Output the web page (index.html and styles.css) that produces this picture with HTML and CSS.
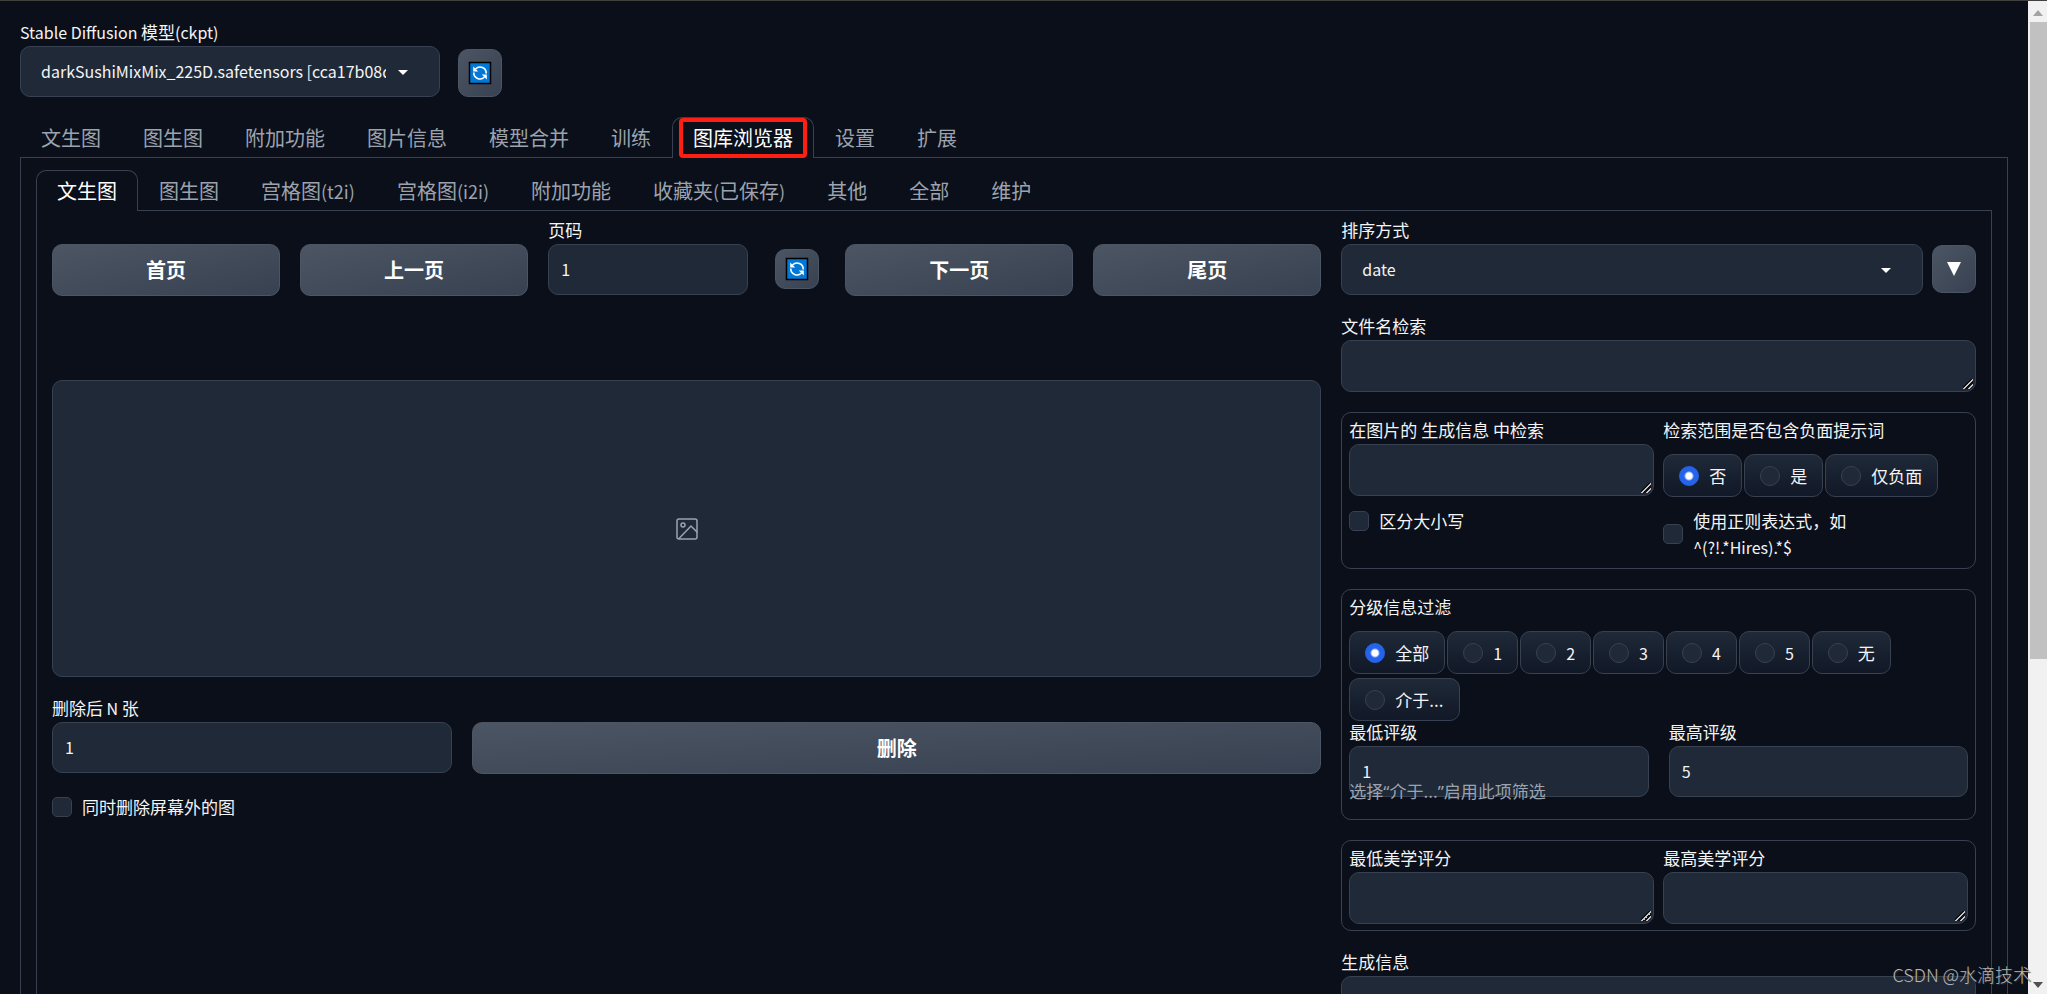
FILE: index.html
```html
<!DOCTYPE html>
<html lang="zh-CN">
<head>
<meta charset="utf-8">
<title>Stable Diffusion</title>
<link rel="stylesheet" href="styles.css">
</head>
<body>
<svg class="defs" aria-hidden="true">
  <symbol id="refresh" viewBox="0 0 24 24">
    <rect x="1.500" y="1.500" width="21" height="21" fill="#0078d7" stroke="#000" stroke-width="1.500"/>
    <g fill="none" stroke="#fff" stroke-width="1.600">
      <path d="M7.500 8A6.200 6.200 0 0 1 18.200 12.500"/>
      <path d="M16.500 16A6.200 6.200 0 0 1 5.800 11.500"/>
    </g>
    <path d="M5.200 5.500v5h5zM18.800 18.500v-5h-5z" fill="#fff"/>
  </symbol>
  <symbol id="caret" viewBox="0 0 18 18"><path d="M4 7h10l-5 5z" fill="#fff"/></symbol>
</svg>
<main class="app">
  <header class="quick">
    <div class="field model">
      <label for="ckpt"><span class="latin">Stable Diffusion </span>模型<span class="latin">(ckpt)</span></label>
      <div class="pick">
        <select id="ckpt" class="box"><option>darkSushiMixMix_225D.safetensors [cca17b08da]</option></select>
        <svg class="caret"><use href="#caret"/></svg>
      </div>
    </div>
    <button class="btn tool" aria-label="刷新模型"><svg class="icon"><use href="#refresh"/></svg></button>
  </header>

  <nav class="tabs">
    <button class="tab">文生图</button>
    <button class="tab">图生图</button>
    <button class="tab">附加功能</button>
    <button class="tab">图片信息</button>
    <button class="tab">模型合并</button>
    <button class="tab">训练</button>
    <button class="tab active marked">图库浏览器</button>
    <button class="tab">设置</button>
    <button class="tab">扩展</button>
  </nav>
  <section class="pane outer">
    <nav class="tabs">
      <button class="tab active">文生图</button>
      <button class="tab">图生图</button>
      <button class="tab">宫格图<span class="latin">(t2i)</span></button>
      <button class="tab">宫格图<span class="latin">(i2i)</span></button>
      <button class="tab">附加功能</button>
      <button class="tab">收藏夹<span class="latin">(</span>已保存<span class="latin">)</span></button>
      <button class="tab">其他</button>
      <button class="tab">全部</button>
      <button class="tab">维护</button>
    </nav>
    <section class="pane inner">
      <div class="left">
        <div class="pager">
          <button class="btn big">首页</button>
          <button class="btn big">上一页</button>
          <div class="field page"><label for="page">页码</label><input id="page" class="box" value="1"></div>
          <div class="reload"><button class="btn tool short" aria-label="刷新"><svg class="icon"><use href="#refresh"/></svg></button></div>
          <button class="btn big">下一页</button>
          <button class="btn big">尾页</button>
        </div>
        <div class="gallery">
          <svg class="picture" viewBox="0 0 24 24" fill="none" stroke="#9ca3af" stroke-width="1.500" stroke-linecap="round" stroke-linejoin="round"><rect x="2" y="2" width="20" height="20" rx="2"/><circle cx="8" cy="8" r="2"/><path d="M22 15l-6-6L4 21.500"/></svg>
        </div>
        <div class="remove">
          <div class="field count"><label for="count">删除后<span class="latin"> N </span>张</label><input id="count" class="box" value="1"></div>
          <button class="btn big">删除</button>
        </div>
        <label class="check"><input type="checkbox">同时删除屏幕外的图</label>
      </div>

      <div class="right">
        <div class="sort">
          <div class="field">
            <label for="sort">排序方式</label>
            <div class="pick">
              <select id="sort" class="box"><option>date</option></select>
              <svg class="caret"><use href="#caret"/></svg>
            </div>
          </div>
          <button class="btn tool" aria-label="降序"><svg class="down" viewBox="0 0 14 14"><path d="M0 0h14L7 14z" fill="#fff"/></svg></button>
        </div>
        <div class="field"><label for="name">文件名检索</label><textarea id="name" class="box"></textarea></div>

        <div class="group">
          <div class="cols">
            <div class="field"><label for="info">在图片的 生成信息 中检索</label><textarea id="info" class="box"></textarea></div>
            <fieldset>
              <legend>检索范围是否包含负面提示词</legend>
              <div class="radios">
                <label class="radio"><input type="radio" name="neg" checked>否</label>
                <label class="radio"><input type="radio" name="neg">是</label>
                <label class="radio"><input type="radio" name="neg">仅负面</label>
              </div>
            </fieldset>
          </div>
          <div class="cols options">
            <label class="check"><input type="checkbox">区分大小写</label>
            <label class="check"><input type="checkbox"><span>使用正则表达式，如<br><span class="latin">^(?!.*Hires).*$</span></span></label>
          </div>
        </div>

        <div class="group">
          <fieldset>
            <legend>分级信息过滤</legend>
            <div class="radios">
              <label class="radio"><input type="radio" name="rank" checked>全部</label>
              <label class="radio"><input type="radio" name="rank"><span class="latin">1</span></label>
              <label class="radio"><input type="radio" name="rank"><span class="latin">2</span></label>
              <label class="radio"><input type="radio" name="rank"><span class="latin">3</span></label>
              <label class="radio"><input type="radio" name="rank"><span class="latin">4</span></label>
              <label class="radio"><input type="radio" name="rank"><span class="latin">5</span></label>
              <label class="radio"><input type="radio" name="rank">无</label>
              <label class="radio"><input type="radio" name="rank">介于...</label>
            </div>
          </fieldset>
          <div class="cols wide">
            <div class="field"><label for="rmin">最低评级</label><input id="rmin" class="box" value="1"></div>
            <div class="field"><label for="rmax">最高评级</label><input id="rmax" class="box" value="5"></div>
          </div>
          <p class="hint">选择<span class="quote">“</span>介于...<span class="quote">”</span>启用此项筛选</p>
        </div>

        <div class="group">
          <div class="cols">
            <div class="field"><label for="amin">最低美学评分</label><textarea id="amin" class="box"></textarea></div>
            <div class="field"><label for="amax">最高美学评分</label><textarea id="amax" class="box"></textarea></div>
          </div>
        </div>
        <div class="field"><label for="gen">生成信息</label><textarea id="gen" class="box"></textarea></div>
      </div>
    </section>
  </section>
</main>
<div class="scroll" aria-hidden="true">
  <svg viewBox="0 0 10 6"><path d="M5 0l5 6H0z" fill="#a3a3a3"/></svg>
  <div class="track"><div class="thumb"></div></div>
  <svg viewBox="0 0 10 6"><path d="M0 0h10L5 6z" fill="#505050"/></svg>
</div>
<div class="watermark">CSDN @水滴技术</div>
</body>
</html>
```
FILE: styles.css
```css
* { box-sizing: border-box; }
body {
  margin: 0;
  height: 100vh;
  overflow: hidden;
  display: flex;
  border-top: 1px solid #41423f;
  background: #0b0f19;
  color: #f3f4f6;
  font: 17px/22px "Noto Sans CJK SC", sans-serif;
}
button, input, select, textarea { font: inherit; color: inherit; margin: 0; }
.latin { font-size: 16px; white-space: pre; }
.quote { font-family: "Noto Sans", sans-serif; }
.defs { position: absolute; width: 0; height: 0; }
.app { flex: 1; min-width: 0; height: 100%; overflow: hidden; padding: 20px 20px 0; }

.field { display: flex; flex-direction: column; min-width: 0; }
.field > label, legend { height: 25px; line-height: 22px; padding: 0; white-space: nowrap; }
.box {
  display: block;
  width: 100%;
  height: 51px;
  padding: 0 12px 2px;
  border: 1px solid #374151;
  border-radius: 10px;
  background: #1f2937;
  font-size: 16px;
  outline: none;
}
textarea.box { height: 52px; padding: 12px; resize: vertical; }
textarea.box::-webkit-resizer {
  background: linear-gradient(135deg, transparent 38%, #111 38% 46%, #c4c4c8 46% 60%, #111 60% 72%, #c4c4c8 72% 84%, transparent 84%) 3px 3px / 10px 10px no-repeat;
}
select.box { appearance: none; padding: 0 53px 2px 20px; }
.pick { position: relative; }
.caret { position: absolute; right: 28px; top: 17px; width: 18px; height: 18px; pointer-events: none; }

.btn {
  display: flex;
  align-items: center;
  justify-content: center;
  padding: 0;
  border: 1px solid #4b5563;
  border-radius: 10px;
  background: linear-gradient(to bottom right, #4b5563, #374151);
  color: #fff;
}
.big { flex: 1; height: 52px; margin-top: 25px; font-size: 20px; font-weight: 700; }
.tool { flex: none; width: 44px; height: 48px; }
.short { height: 40px; }
.icon { width: 24px; height: 24px; }
.down { width: 14px; height: 14px; }

.quick { display: flex; align-items: flex-end; gap: 18px; margin-bottom: 20px; }
.model { width: 420px; }

.tabs { display: flex; border-bottom: 1px solid #374151; }
.tab {
  position: relative;
  height: 41px;
  margin-bottom: -1px;
  padding: 0 20px;
  border: 1px solid transparent;
  border-bottom: 0;
  border-radius: 10px 10px 0 0;
  background: none;
  color: #9ca3af;
  font-size: 20px;
  white-space: nowrap;
}
.tab .latin { font-size: 18px; }
.active { border-color: #374151; background: #0b0f19; color: #fff; }
.marked::after {
  content: "";
  position: absolute;
  inset: 0 6px 0;
  border: 4px solid #ff1e12;
  border-radius: 4px;
}
.pane { border: 1px solid #374151; border-top: 0; }
.outer { padding: 12px 15px; }
.inner { display: grid; grid-template-columns: 2fr 1fr; gap: 20px; padding: 8px 15px 20px; }
.left, .right { display: flex; flex-direction: column; gap: 20px; min-width: 0; }

.pager { display: flex; gap: 20px; margin-bottom: 64px; }
.page { width: 200px; }
.reload { display: flex; justify-content: center; width: 57px; padding-top: 30px; }
.gallery {
  display: flex;
  align-items: center;
  justify-content: center;
  height: 297px;
  border: 1px solid #374151;
  border-radius: 10px;
  background: #1f2937;
}
.picture { width: 24px; height: 24px; }
.remove { display: flex; gap: 20px; }
.count { width: 400px; }

.check { display: flex; align-items: center; gap: 10px; line-height: 26px; }
input[type="checkbox"], input[type="radio"] {
  appearance: none;
  flex: none;
  width: 20px;
  height: 20px;
  border: 1px solid #374151;
  border-radius: 5px;
  background: #1f2937;
}
input[type="radio"] { border-radius: 50%; }
input[type="radio"]:checked {
  border-color: #2563eb;
  background: radial-gradient(circle, #fff 3px, #2563eb 5px);
}

.sort { display: flex; gap: 9px; }
.sort .field { flex: 1; }
.sort .tool { margin-top: 26px; }
.group { padding: 6px 7px; border: 1px solid #374151; border-radius: 10px; }
.cols { display: grid; grid-template-columns: 1fr 1fr; gap: 9px; }
.wide { gap: 20px; }
.options { margin: 11px 0 2px; align-items: start; }
fieldset { min-width: 0; margin: 0; padding: 0; border: 0; }
.radios { display: flex; flex-wrap: wrap; gap: 4px 2px; padding: 10px 0 0; }
.radio {
  display: flex;
  align-items: center;
  gap: 10px;
  height: 43px;
  padding: 0 15px;
  border: 1px solid #374151;
  border-radius: 10px;
  background: linear-gradient(#1f2937, #111827);
}
.hint { position: relative; margin: -19px 0 8px; line-height: 26px; color: #9ca3af; }

.scroll {
  display: flex;
  flex-direction: column;
  align-items: center;
  flex: none;
  width: 19px;
  padding: 9px 0 6px;
  background: #f1f1f1;
}
.scroll svg { width: 10px; height: 6px; }
.track { flex: 1; align-self: stretch; padding: 6px 0 10px 2px; }
.thumb { height: 67%; background: #c1c1c1; }
.watermark {
  position: absolute;
  right: 16px;
  bottom: 9px;
  color: #b4b6ba;
  font-size: 18px;
  font-weight: 300;
  text-shadow: 1px 1px 1px #333;
}
```
